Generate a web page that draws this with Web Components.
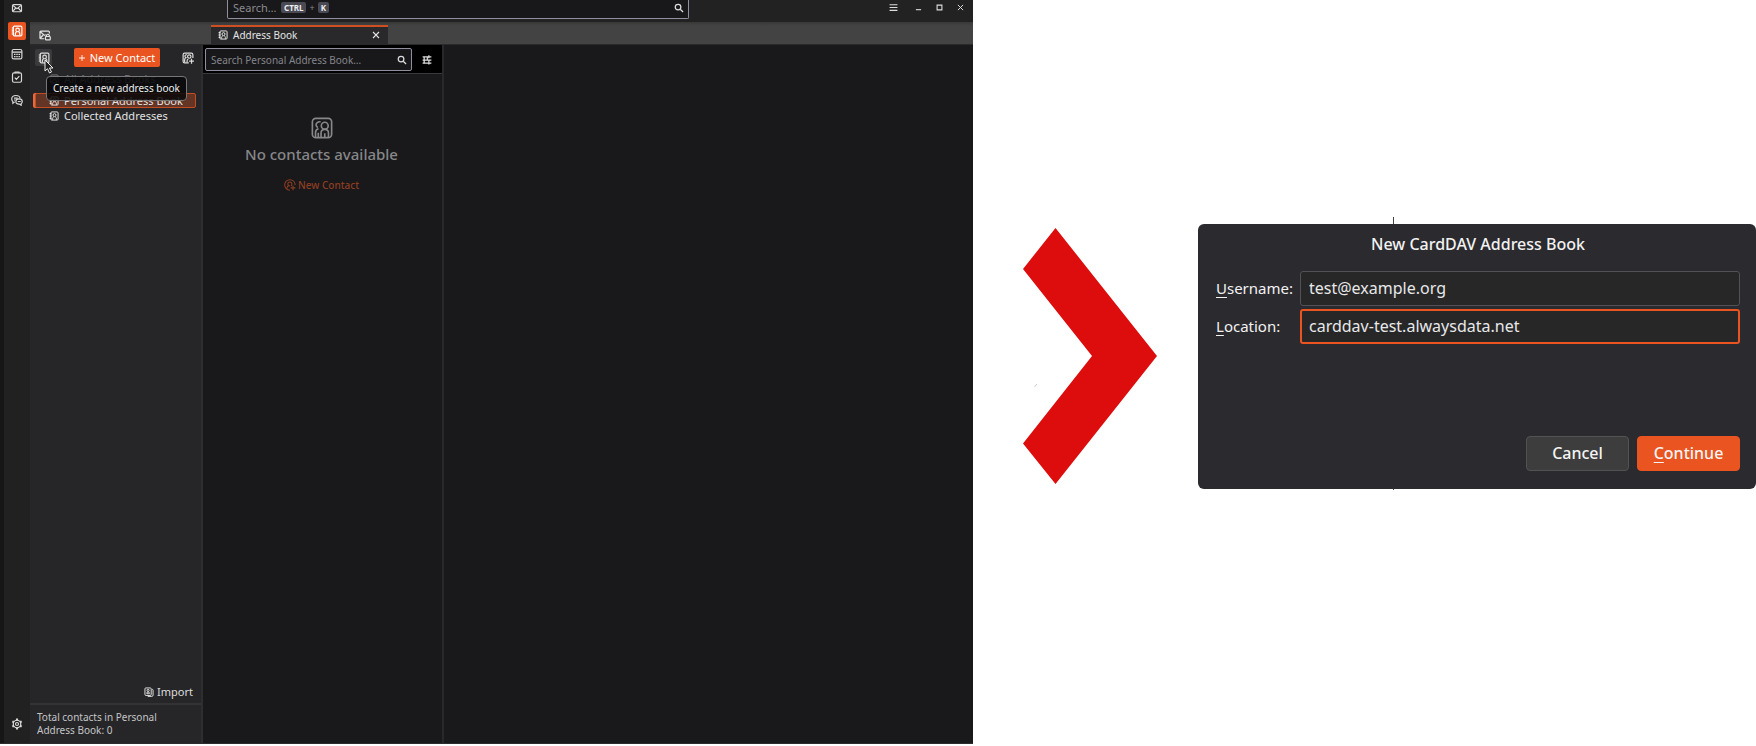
<!DOCTYPE html>
<html lang="en">
<head>
<meta charset="utf-8">
<title>CardDAV address book</title>
<style>
    body {
        margin: 0;
        background: #fff;
        font-family: "Noto Sans", "Open Sans", sans-serif;
    }
</style>
</head>
<body>
<setup-guide>
    <mail-window></mail-window>
    <step-arrow></step-arrow>
    <carddav-dialog heading="New CardDAV Address Book"></carddav-dialog>
</setup-guide>

<script>
const ICONS = {
    mail: '<rect x="2" y="3.5" width="12" height="9.5" rx="1.5"/><path d="M2.5 4.5 8 9l5.5-4.5M2.5 12.5 6.3 8M13.5 12.5 9.7 8"/>',
    book: '<rect x="3" y="1.5" width="11.5" height="13" rx="1.5"/><path d="M1 4h3M1 6.7h3M1 9.3h3M1 12h3M5.8 14v-2.2c0-1.3.8-2 1.6-2.3M11.8 14v-2.2c0-1.3-.8-2-1.6-2.3"/><circle cx="8.8" cy="6.6" r="2.4"/>',
    calendar: '<rect x="1.5" y="2" width="13" height="12.5" rx="2"/><path d="M1.5 5.500h13" stroke-width="1.8"/><path d="M4 8.500h8M4 11.5h8" stroke-width="1.6" stroke-dasharray="2 1"/>',
    tasks: '<rect x="2" y="2.5" width="12" height="12.5" rx="2"/><path d="M5.5 3V1.5h5V3M5 8.8l2.2 2.4L11 6.8"/>',
    chat: '<path d="M5 10.5 2.5 12.5V10C1.5 9.3 1 8.5 1 6.5 1 3.5 3 2 6.5 2S12 3.5 12 6M4 5.5h5M4 8h2"/><path d="M10.5 6.5c3 0 4.5 1.2 4.5 3.5 0 1.3-.5 2.3-1.5 2.9V15l-2.3-1.6C8 13.5 6.5 12.4 6.5 10s1.4-3.5 4-3.5zM9 10h4"/>',
    gear: '<circle cx="8" cy="8" r="5"/><circle cx="8" cy="8" r="2"/><path d="M8 .8v2.700M8 12.500v2.700M1.800 4.400l2.300 1.300M11.900 10.300l2.300 1.300M1.800 11.600l2.300-1.300M11.900 5.700l2.300-1.300" stroke-width="2.800"/>',
    account: '<path d="M7 13H2.5C1.7 13 1.3 12.5 1.3 12V4c0-.7.5-1.2 1.2-1.2h10c.8 0 1.3.5 1.3 1.2v2M2 4l5.5 4.5L9 7.5M2 12l3.5-4"/><rect x="8.7" y="10" width="6.3" height="4.5" rx=".8"/><path d="M10 10V8.5c0-2 3.7-2 3.7 0V10"/>',
    addressPlus: '<path d="M14.5 8V3.500c0-1.200-.8-2-2-2h-9c-1.200 0-2 .8-2 2v9c0 1.200.8 2 2 2H9"/><circle cx="9.700" cy="6" r="2.300"/><path d="M6.800 14v-2.500c0-1.200.7-2 1.900-2.200M6.500 3.800C4.700 3.200 3.800 4.500 4 6c.1.800.6 1.300 1.200 1.600-1.200.5-1.700 1.400-1.700 2.600V14M12.700 9v6.500M9.500 12.200h6.400"/>',
    people: '<rect x="1" y="1" width="14" height="14" rx="2.5"/><circle cx="10" cy="6.300" r="2.500"/><path d="M7.300 14.5v-2.800c0-1.700 1-2.700 2.700-2.700s2.700 1 2.700 2.700v2.800M10 11.800v2.700M7 3.600C5 3 3.500 4.500 3.700 6c.2.900.7 1.300 1.300 1.700M5.500 8.500c-1.500.3-2.200 1.300-2.200 2.700v3.300M5.300 11.500v3"/>',
    atPlus: '<path d="M8 14.900A7 7 0 1 1 14.900 8"/><path d="M4 13v-1.500c0-1.500 1-2.300 2.300-2.600M8 9.300A2.700 2.700 0 1 1 10.500 7c0 1.200-.5 2-1.300 2.500M12 8.500V15M8.800 11.800h6.400"/>',
    importBook: '<rect x="1.500" y="1.500" width="10" height="12" rx="1.500"/><path d="M13 3.500c1 .2 1.500.8 1.500 1.600V13c0 1.300-.7 2-2 2H6"/><circle cx="6.5" cy="5.5" r="1.7"/><path d="M4.500 10.700V9.500c0-2.300 4-2.300 4 0v1.200z"/>',
    search: '<circle cx="6.5" cy="6.5" r="4.5"/><path d="m10 10 4.5 4.500"/>',
    options: '<path d="M1 3h14M1 8h14M1 13h14" stroke-width="2"/><path d="M3.500 3v10M8.500 3v5M11 .5V5M11 8v7" stroke-width="2"/>',
    menu: '<path d="M1 3h14M1 8h14M1 13h14" stroke-width="2"/>',
    minimize: '<path d="M2 13h12" stroke-width="2.5"/>',
    maximize: '<path d="M2.500 2.500h11v11h-11z" stroke-width="2.5"/>',
    close: '<path d="m2 2 12 12M14 2 2 14" stroke-width="2.2"/>',
    plus: '<path d="M8 2v12M2 8h12" stroke-width="1.8"/>'
};

class UiIcon extends HTMLElement {
    connectedCallback() {
        this.attachShadow({ mode: 'open' });
        this.shadowRoot.innerHTML = `
            <style>
                :host {
                    display: block;
                    flex: none;
                    width: var(--size, 12px);
                    height: var(--size, 12px);
                }
                svg {
                    display: block;
                    width: 100%;
                    height: 100%;
                    fill: none;
                    stroke: currentColor;
                    stroke-width: var(--stroke, 1.6);
                }
            </style>
            <svg viewBox="0 0 16 16" aria-hidden="true">${ICONS[this.getAttribute('name')]}</svg>
        `;
    }
}

class SetupGuide extends HTMLElement {
    constructor() {
        super();
        this.attachShadow({ mode: 'open' });
        this.shadowRoot.innerHTML = `
            <style>
                :host {
                    display: grid;
                    grid-template-columns: 973fr 225fr 558fr;
                    min-height: 100vh;
                }
            </style>
            <slot></slot>
        `;
    }
}

class TitleBar extends HTMLElement {
    constructor() {
        super();
        this.attachShadow({ mode: 'open' });
        this.shadowRoot.innerHTML = `
            <style>
                :host {
                    display: grid;
                    grid-template-columns: 197fr 462fr 284fr;
                    align-items: start;
                    height: 22px;
                    background: #222223;
                    color: #ddd;
                }
                .search {
                    grid-column: 2;
                    display: flex;
                    align-items: center;
                    box-sizing: border-box;
                    height: 19px;
                    padding: 0 4px 3px 5px;
                    border: 1px solid #8f8f9d;
                    border-top: 0;
                    border-radius: 0 0 2px 2px;
                    background: #18181b;
                    --size: 10px;
                    --stroke: 2;
                }
                input {
                    width: 48px;
                    padding: 0;
                    border: 0;
                    background: none;
                    color: #ddd;
                    font: 11px/14px "Noto Sans", sans-serif;
                }
                input::placeholder {
                    color: #8a8a8e;
                    opacity: 1;
                }
                kbd {
                    padding: 0 3px;
                    border-radius: 2px;
                    background: #4a4a54;
                    color: #eee;
                    font: bold 8px/11px "Noto Sans", sans-serif;
                }
                .plus {
                    margin: 0 3px;
                    color: #85858c;
                    font-size: 9px;
                    line-height: 11px;
                }
                .search ui-icon {
                    margin-left: auto;
                }
                .controls {
                    display: flex;
                    align-items: center;
                    justify-content: flex-end;
                    gap: 14px;
                    padding: 3px 9px 0 0;
                    --size: 7px;
                }
                button {
                    display: block;
                    padding: 0;
                    border: 0;
                    background: none;
                    color: inherit;
                }
                .menu {
                    margin-right: 3px;
                    --size: 9px;
                }
            </style>
            <div class="search">
                <input type="text" placeholder="Search…" aria-label="Search">
                <kbd>CTRL</kbd><span class="plus">+</span><kbd>K</kbd>
                <ui-icon name="search"></ui-icon>
            </div>
            <div class="controls">
                <button class="menu" aria-label="Menu"><ui-icon name="menu"></ui-icon></button>
                <button aria-label="Minimize"><ui-icon name="minimize"></ui-icon></button>
                <button aria-label="Maximize"><ui-icon name="maximize"></ui-icon></button>
                <button aria-label="Close"><ui-icon name="close"></ui-icon></button>
            </div>
        `;
    }
}

class SpacesBar extends HTMLElement {
    constructor() {
        super();
        this.attachShadow({ mode: 'open' });
        this.shadowRoot.innerHTML = `
            <style>
                :host {
                    display: flex;
                    flex-direction: column;
                    align-items: center;
                    gap: 5px;
                    margin-top: -1px;
                    padding-bottom: 10px;
                    border-left: 4px solid #161616;
                    background: #212122;
                    color: #d8d8d8;
                }
                button {
                    display: grid;
                    place-items: center;
                    width: 18px;
                    height: 18px;
                    padding: 0;
                    border: 0;
                    border-radius: 2px;
                    background: none;
                    color: inherit;
                }
                .active {
                    background: #e95420;
                    color: #fff;
                }
                .settings {
                    margin-top: auto;
                }
            </style>
            <button aria-label="Mail"><ui-icon name="mail"></ui-icon></button>
            <button class="active" aria-label="Address Book"><ui-icon name="book"></ui-icon></button>
            <button aria-label="Calendar"><ui-icon name="calendar"></ui-icon></button>
            <button aria-label="Tasks"><ui-icon name="tasks"></ui-icon></button>
            <button aria-label="Chat"><ui-icon name="chat"></ui-icon></button>
            <button class="settings" aria-label="Settings"><ui-icon name="gear"></ui-icon></button>
        `;
    }
}

class TabStrip extends HTMLElement {
    constructor() {
        super();
        this.attachShadow({ mode: 'open' });
        this.shadowRoot.innerHTML = `
            <style>
                :host {
                    display: grid;
                    grid-template-columns: 181px 177px;
                    align-items: end;
                    justify-items: start;
                    box-sizing: border-box;
                    height: 23px;
                    border-bottom: 1px solid #2a2a2b;
                    background: linear-gradient(#383838, #434343 4px);
                    color: #e4e4e4;
                }
                button {
                    display: block;
                    padding: 0;
                    border: 0;
                    background: none;
                    color: inherit;
                }
                .mail {
                    padding: 0 9px 3px;
                }
                .tab {
                    display: flex;
                    align-items: center;
                    gap: 5px;
                    box-sizing: border-box;
                    width: 100%;
                    height: 20px;
                    margin-bottom: -1px;
                    padding: 0 8px 2px 7px;
                    border-top: 2px solid #d04f22;
                    background: #29292b;
                    font-size: 10px;
                    line-height: 14px;
                    --size: 10px;
                }
                .tab button {
                    margin-left: auto;
                    --size: 8px;
                }
            </style>
            <button class="mail" aria-label="Mail"><ui-icon name="account"></ui-icon></button>
            <div class="tab">
                <ui-icon name="book"></ui-icon>
                <span>Address Book</span>
                <button aria-label="Close tab"><ui-icon name="close"></ui-icon></button>
            </div>
        `;
    }
}

class BookRow extends HTMLElement {
    constructor() {
        super();
        this.attachShadow({ mode: 'open' });
        this.shadowRoot.innerHTML = `
            <style>
                :host {
                    display: flex;
                    align-items: center;
                    gap: 5px;
                    box-sizing: border-box;
                    height: 15px;
                    margin: 0 5px 0 5px;
                    padding-left: 13px;
                    border: 1px solid transparent;
                    border-radius: 2px;
                    color: #e2e2e2;
                    font-size: 11px;
                    line-height: 14px;
                    --size: 10px;
                }
                :host([faded]) {
                    color: #77777a;
                }
                :host([selected]) {
                    border-color: #c34b22;
                    background: #643424;
                    box-shadow: -2px 0 #e8693c;
                }
            </style>
            <ui-icon name="book"></ui-icon>
            <slot></slot>
        `;
    }
}

class BookSidebar extends HTMLElement {
    constructor() {
        super();
        this.attachShadow({ mode: 'open' });
        this.shadowRoot.innerHTML = `
            <style>
                :host {
                    display: flex;
                    flex-direction: column;
                    border-right: 2px solid #2e2e31;
                    background: #262628;
                    color: #ddd;
                }
                button {
                    display: flex;
                    align-items: center;
                    padding: 0;
                    border: 0;
                    background: none;
                    color: inherit;
                    font: 11px/14px "Noto Sans", sans-serif;
                }
                .tools {
                    position: relative;
                    display: flex;
                    align-items: center;
                    justify-content: space-between;
                    padding: 3px 7px 2px 5px;
                }
                .create {
                    justify-content: center;
                    width: 17px;
                    height: 17px;
                    border-radius: 2px;
                    background: #3a3a3c;
                }
                .new {
                    gap: 4px;
                    height: 19px;
                    padding: 0 5px 0 4px;
                    border-radius: 2px;
                    background: #e95420;
                    color: #fff;
                    --size: 8px;
                }
                /* hangs below the pointer, over the first rows */
                .tooltip {
                    position: absolute;
                    z-index: 1;
                    top: 31px;
                    left: 16px;
                    padding: 4px 6px 5px;
                    border: 1px solid #77777a;
                    border-radius: 4px;
                    background: rgba(8, 8, 9, .85);
                    color: #eee;
                    font-size: 10px;
                    line-height: 14px;
                    white-space: nowrap;
                }
                .pointer {
                    position: absolute;
                    z-index: 2;
                    top: 14px;
                    left: 14px;
                    width: 11px;
                    height: 15px;
                }
                .rows {
                    display: grid;
                    padding-top: 2px;
                }
                .rows > :first-child {
                    margin-bottom: 7px;
                }
                .import {
                    gap: 3px;
                    margin: auto 8px 4px auto;
                    --size: 10px;
                }
                .total {
                    margin: 0;
                    padding: 6px 7px;
                    border-top: 2px solid #333336;
                    color: #c4c4c6;
                    font-size: 10px;
                    line-height: 13px;
                }
            </style>
            <div class="tools">
                <button class="create" aria-label="Create a new address book" aria-describedby="tip"><ui-icon name="book"></ui-icon></button>
                <button class="new"><ui-icon name="plus"></ui-icon>New Contact</button>
                <button aria-label="New list"><ui-icon name="addressPlus"></ui-icon></button>
                <svg class="pointer" viewBox="0 0 11 15"><path d="M1 1v11l2.500-2.300L5.500 14l2-1-2-4H9z" fill="#222" stroke="#eee"/></svg>
                <div class="tooltip" id="tip" role="tooltip">Create a new address book</div>
            </div>
            <div class="rows">
                <book-row faded>All Address Books</book-row>
                <book-row selected>Personal Address Book</book-row>
                <book-row>Collected Addresses</book-row>
            </div>
            <button class="import"><ui-icon name="importBook"></ui-icon>Import</button>
            <p class="total">Total contacts in Personal<br>Address Book: 0</p>
        `;
    }
}

class ContactList extends HTMLElement {
    constructor() {
        super();
        this.attachShadow({ mode: 'open' });
        this.shadowRoot.innerHTML = `
            <style>
                :host {
                    display: block;
                    border-right: 2px solid #28282a;
                    background: #19191b;
                    color: #87878a;
                }
                button {
                    display: flex;
                    align-items: center;
                    padding: 0;
                    border: 0;
                    background: none;
                    color: inherit;
                }
                .bar {
                    display: flex;
                    align-items: center;
                    gap: 10px;
                    padding: 3px 10px 2px 2px;
                    border-bottom: 1px solid #3a3a3d;
                    background: #000;
                    color: #ddd;
                    --size: 10px;
                    --stroke: 2;
                }
                .field {
                    display: flex;
                    flex: 1;
                    align-items: center;
                    box-sizing: border-box;
                    height: 23px;
                    padding: 0 4px 0 5px;
                    border: 1px solid #8f8f9d;
                    border-radius: 2px;
                    background: #18181b;
                }
                input {
                    flex: 1;
                    min-width: 0;
                    padding: 0;
                    border: 0;
                    background: none;
                    color: #ddd;
                    font: 10px/14px "Noto Sans", sans-serif;
                }
                input::placeholder {
                    color: #85858a;
                    opacity: 1;
                }
                .empty {
                    display: grid;
                    justify-items: center;
                    padding: 43px 2px 0 0;
                    --size: 22px;
                    --stroke: 1.2;
                }
                h2 {
                    margin: 5px 0 14px;
                    font-size: 15px;
                    font-weight: 500;
                    line-height: 20px;
                }
                .empty button {
                    gap: 2px;
                    color: #8e3d21;
                    font: 500 10px/14px "Noto Sans", sans-serif;
                    --size: 12px;
                    --stroke: 1.4;
                }
            </style>
            <div class="bar">
                <div class="field">
                    <input type="text" placeholder="Search Personal Address Book…" aria-label="Search Personal Address Book">
                    <ui-icon name="search"></ui-icon>
                </div>
                <button aria-label="List display options"><ui-icon name="options"></ui-icon></button>
            </div>
            <div class="empty">
                <ui-icon name="people"></ui-icon>
                <h2>No contacts available</h2>
                <button><ui-icon name="atPlus"></ui-icon>New Contact</button>
            </div>
        `;
    }
}

class MailWindow extends HTMLElement {
    constructor() {
        super();
        this.attachShadow({ mode: 'open' });
        this.shadowRoot.innerHTML = `
            <style>
                :host {
                    display: grid;
                    grid-template-columns: 30px minmax(0, 1fr);
                    margin-bottom: 2px;
                    border-bottom: 1px solid #2c2c2e;
                    background: #19191b;
                    overflow: hidden;
                }
                .main {
                    display: flex;
                    flex-direction: column;
                }
                .panes {
                    flex: 1;
                    display: grid;
                    grid-template-columns: 173px 241px minmax(0, 1fr);
                }
            </style>
            <spaces-bar></spaces-bar>
            <div class="main">
                <title-bar></title-bar>
                <tab-strip></tab-strip>
                <div class="panes">
                    <book-sidebar></book-sidebar>
                    <contact-list></contact-list>
                </div>
            </div>
        `;
    }
}

class StepArrow extends HTMLElement {
    constructor() {
        super();
        this.attachShadow({ mode: 'open' });
        this.shadowRoot.innerHTML = `
            <style>
                :host {
                    display: flex;
                    align-items: center;
                    justify-content: center;
                    padding: 0 0 35px 8px;
                }
                svg {
                    width: 134px;
                    height: 256px;
                }
            </style>
            <svg viewBox="0 0 134 256" aria-hidden="true">
                <path d="M32.500 0 134 128 32.500 256 0 215.500 69 128 0 41z" fill="#dd0d0d"/>
                <path d="m11.500 159 2.500-3" stroke="#bbb" stroke-width=".8"/>
            </svg>
        `;
    }
}

class CarddavDialog extends HTMLElement {
    constructor() {
        super();
        this.attachShadow({ mode: 'open' });
    }

    connectedCallback() {
        this.shadowRoot.innerHTML = `
            <style>
                :host {
                    display: flex;
                    flex-direction: column;
                    align-items: stretch;
                    justify-content: center;
                    padding-bottom: 40px;
                    color: #f2f2f2;
                    font-size: 16px;
                    line-height: 22px;
                }
                /* window edge showing above and below the dialog */
                .edge {
                    align-self: flex-start;
                    width: 1px;
                    height: 7px;
                    margin-left: 35%;
                    background: #444;
                }
                .edge.low {
                    height: 1px;
                }
                form {
                    display: flex;
                    flex-direction: column;
                    box-sizing: border-box;
                    min-height: 265px;
                    padding: 9px 16px 18px 18px;
                    border-radius: 6px;
                    background: #2b2a2f;
                }
                h1 {
                    margin: 0 0 16px;
                    font-size: 16px;
                    font-weight: 500;
                    line-height: 22px;
                    text-align: center;
                }
                .fields {
                    display: grid;
                    grid-template-columns: 77px minmax(0, 1fr);
                    align-items: center;
                    gap: 3px 7px;
                }
                label {
                    font-size: 15px;
                    white-space: nowrap;
                }
                input {
                    box-sizing: border-box;
                    width: 100%;
                    height: 35px;
                    padding: 0 8px;
                    border: 1px solid #515157;
                    border-radius: 3px;
                    background: #272728;
                    color: #e8e8e8;
                    font: inherit;
                }
                input.focused {
                    padding: 0 7px;
                    border: 2px solid #e95420;
                }
                u {
                    text-underline-offset: 3px;
                    text-decoration-thickness: 1px;
                }
                .actions {
                    display: flex;
                    justify-content: flex-end;
                    gap: 8px;
                    margin-top: auto;
                }
                button {
                    width: 103px;
                    height: 35px;
                    padding: 0;
                    border: 1px solid #525252;
                    border-radius: 4px;
                    background: #3d3d3e;
                    color: #f4f4f4;
                    font: inherit;
                    font-weight: 500;
                }
                .primary {
                    border-color: #e95420;
                    background: #e95420;
                }
            </style>
            <div class="edge"></div>
            <form>
                <h1>${this.getAttribute('heading')}</h1>
                <div class="fields">
                    <label for="username"><u>U</u>sername:</label>
                    <input id="username" type="text" value="test@example.org">
                    <label for="location"><u>L</u>ocation:</label>
                    <input id="location" class="focused" type="text" value="carddav-test.alwaysdata.net">
                </div>
                <div class="actions">
                    <button type="button">Cancel</button>
                    <button type="button" class="primary"><u>C</u>ontinue</button>
                </div>
            </form>
            <div class="edge low"></div>
        `;
    }
}

customElements.define('ui-icon', UiIcon);
customElements.define('title-bar', TitleBar);
customElements.define('spaces-bar', SpacesBar);
customElements.define('tab-strip', TabStrip);
customElements.define('book-row', BookRow);
customElements.define('book-sidebar', BookSidebar);
customElements.define('contact-list', ContactList);
customElements.define('mail-window', MailWindow);
customElements.define('step-arrow', StepArrow);
customElements.define('carddav-dialog', CarddavDialog);
customElements.define('setup-guide', SetupGuide);
</script>
</body>
</html>
